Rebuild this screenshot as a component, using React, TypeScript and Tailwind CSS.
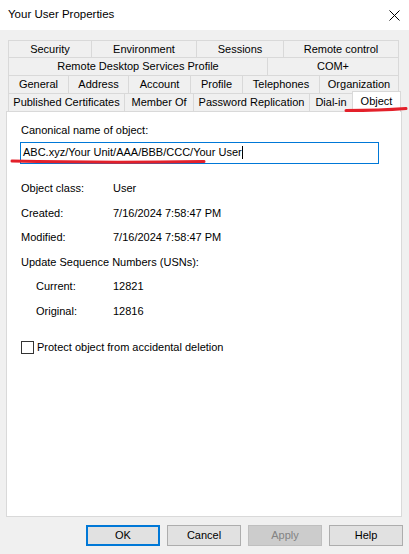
import React from 'react';

type Tab = [string, number];

const tabRows: Tab[][] = [
  [['Security', 84], ['Environment', 106], ['Sessions', 88], ['Remote control', 116]],
  [['Remote Desktop Services Profile', 260], ['COM+', 132]],
  [['General', 61], ['Address', 61], ['Account', 63], ['Profile', 53], ['Telephones', 78], ['Organization', 80]],
];

const lastRow: Tab[] = [
  ['Published Certificates', 117],
  ['Member Of', 70],
  ['Password Replication', 117],
  ['Dial-in', 44],
];

const info = [
  { label: 'Object class:', value: 'User', indent: false },
  { label: 'Created:', value: '7/16/2024 7:58:47 PM', indent: false },
  { label: 'Modified:', value: '7/16/2024 7:58:47 PM', indent: false },
  { label: 'Update Sequence Numbers (USNs):', value: '', indent: false },
  { label: 'Current:', value: '12821', indent: true },
  { label: 'Original:', value: '12816', indent: true },
];

function Button({ label, primary, disabled }: { label: string; primary?: boolean; disabled?: boolean }) {
  const tone = primary
    ? 'border-2 border-[#0078d7] bg-[#e1e1e1] text-black'
    : disabled
    ? 'border border-[#bfbfbf] bg-[#cccccc] text-[#838383]'
    : 'border border-[#adadad] bg-[#e1e1e1] text-black';
  return (
    <div className={`w-[74px] h-[21px] flex items-center justify-center ${tone}`}>{label}</div>
  );
}

export default function App() {
  return (
    <div
      className="relative w-[409px] h-[554px] bg-[#f0f0f0] text-[11px] text-black overflow-hidden"
      style={{ fontFamily: '"Liberation Sans", Arial, sans-serif' }}
    >
      {/* Title bar */}
      <div className="h-[30px] bg-white flex items-center justify-between pl-[8px] pr-[9px]">
        <span className="text-[11.5px]">Your User Properties</span>
        <svg width="11" height="11" viewBox="0 0 11 11">
          <path d="M0.5 0.5 L10.5 10.5 M10.5 0.5 L0.5 10.5" stroke="#000" strokeWidth="1" />
        </svg>
      </div>

      {/* Tabs */}
      <div className="pt-[10px] pl-[8px]">
        {tabRows.map((row, i) => (
          <div key={i} className={`flex ${i === 0 ? 'h-[18px]' : 'h-[19px] -mt-px'}`}>
            {row.map(([name, w], j) => (
              <div
                key={name}
                className={`h-full flex items-center justify-center border border-[#d9d9d9] whitespace-nowrap ${j > 0 ? '-ml-px' : ''}`}
                style={{ width: w }}
              >
                {name}
              </div>
            ))}
          </div>
        ))}
        <div className="flex items-end h-[18px] -mt-px">
          {lastRow.map(([name, w], j) => (
            <div
              key={name}
              className={`h-full flex items-center justify-center border-t border-x border-[#d9d9d9] whitespace-nowrap ${j > 0 ? '-ml-px' : ''}`}
              style={{ width: w }}
            >
              {name}
            </div>
          ))}
          <div className="relative z-10 w-[49px] h-[21px] -mb-px -ml-px flex items-center justify-center pb-[2px] bg-white border-t border-x border-[#d9d9d9]">
            Object
          </div>
        </div>
      </div>

      {/* Panel */}
      <div className="ml-[6px] w-[396px] h-[406px] bg-white border border-[#d9d9d9] pl-[14px] pt-[12px]">
        <div className="h-[13px] leading-[13px]">Canonical name of object:</div>
        <div className="mt-[5px] -ml-px w-[359px] h-[22px] border border-[#0078d7] flex items-center pl-[2px] pb-[1px] whitespace-nowrap">
          <span>ABC.xyz/Your Unit/AAA/BBB/CCC/Your User</span>
          <span className="w-px h-[13px] bg-black" />
        </div>

        <div className="mt-[12px]">
          {info.map(row => (
            <div key={row.label} className="h-[24.5px] flex items-center whitespace-nowrap">
              {row.value ? (
                <>
                  <span className={row.indent ? 'w-[92px] pl-[15px]' : 'w-[92px]'}>{row.label}</span>
                  <span>{row.value}</span>
                </>
              ) : (
                <span>{row.label}</span>
              )}
            </div>
          ))}
        </div>

        <div className="mt-[18px] h-[13px] flex items-center gap-[3px]">
          <span className="w-[13px] h-[13px] border border-[#333333] bg-white" />
          <span>Protect object from accidental deletion</span>
        </div>
      </div>

      {/* Buttons */}
      <div className="mt-[8px] flex justify-end gap-[7px] pr-[6px]">
        <Button label="OK" primary />
        <Button label="Cancel" />
        <Button label="Apply" disabled />
        <Button label="Help" />
      </div>

      {/* Red annotation marks */}
      <svg className="absolute inset-0 z-20 pointer-events-none" width="409" height="554">
        <path d="M346 110.5 Q380 110.5 406 108.5" stroke="#e3202a" strokeWidth="3" fill="none" strokeLinecap="round" />
        <path d="M12 161 Q100 163 204 161.5" stroke="#e3202a" strokeWidth="3" fill="none" strokeLinecap="round" />
      </svg>
    </div>
  );
}
